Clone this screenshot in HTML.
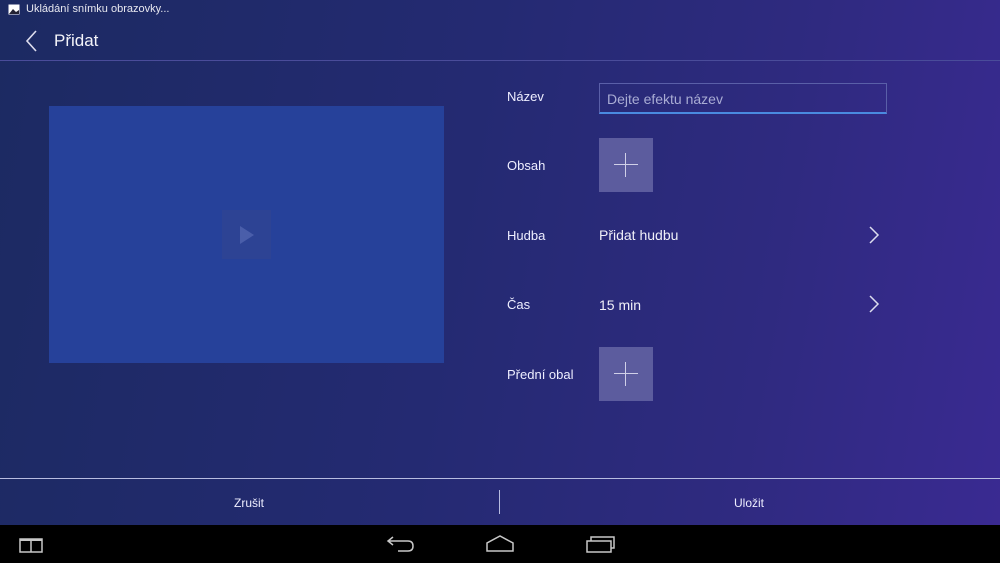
<!DOCTYPE html>
<html><head><meta charset="utf-8"><style>
*{margin:0;padding:0;box-sizing:border-box}
body{width:1000px;height:563px;overflow:hidden;font-family:"Liberation Sans",sans-serif;color:#fff;position:relative;
background:linear-gradient(100deg,#1c2a62 0%,#242a72 45%,#2f2a80 75%,#3a2a92 100%)}
.a{position:absolute}
.lbl{font-size:13px;color:#eef}
.plus{width:54px;height:54px;background:#5c5c9e}
.plus:before,.plus:after{content:"";position:absolute;background:#d0d0e8}
.plus:before{left:15px;top:26px;width:24px;height:1px}
.plus:after{left:26px;top:15px;width:1px;height:24px}
</style></head><body>
<svg class="a" style="left:8px;top:4px" width="12" height="11"><rect x="0.5" y="0.5" width="11" height="10" fill="#fff"/><path d="M1 10 L5 5 L8 8 L11 6 V10Z" fill="#223"/></svg>
<div class="a" style="left:26px;top:3px;font-size:11px;color:#e8e8f0">Ukládání snímku obrazovky...</div>
<svg class="a" style="left:24px;top:29px" width="14" height="24"><path d="M12 2 L3 12 L12 22" stroke="#dde" stroke-width="1.6" fill="none"/></svg>
<div class="a" style="left:54px;top:31px;font-size:17px;color:#f4f4fa">Přidat</div>
<div class="a" style="left:0;top:60px;width:1000px;height:1px;background:#4a4c9a"></div>
<div class="a" style="left:49px;top:106px;width:395px;height:257px;background:#26419a"></div>
<div class="a" style="left:222px;top:210px;width:49px;height:49px;background:#2d4394"></div>
<svg class="a" style="left:238px;top:224px" width="18" height="22"><path d="M2 2 L16 11 L2 20Z" fill="#4a5eaa"/></svg>
<div class="a lbl" style="left:507px;top:89px">Název</div>
<div class="a" style="left:599px;top:83px;width:288px;height:31px;border:1px solid #5a5fa8;border-bottom:2px solid #4a8ae0"></div>
<div class="a" style="left:607px;top:91px;font-size:14px;color:#a9acd4">Dejte efektu název</div>
<div class="a lbl" style="left:507px;top:158px">Obsah</div>
<div class="a plus" style="left:599px;top:138px"></div>
<div class="a lbl" style="left:507px;top:228px">Hudba</div>
<div class="a" style="left:599px;top:227px;font-size:14px;color:#f0f0f8">Přidat hudbu</div>
<svg class="a" style="left:868px;top:225px" width="12" height="20"><path d="M2 2 L10 10 L2 18" stroke="#dde" stroke-width="1.5" fill="none"/></svg>
<div class="a lbl" style="left:507px;top:297px">Čas</div>
<div class="a" style="left:599px;top:297px;font-size:14px;color:#f0f0f8">15 min</div>
<svg class="a" style="left:868px;top:294px" width="12" height="20"><path d="M2 2 L10 10 L2 18" stroke="#dde" stroke-width="1.5" fill="none"/></svg>
<div class="a lbl" style="left:507px;top:367px">Přední obal</div>
<div class="a plus" style="left:599px;top:347px"></div>
<div class="a" style="left:0;top:478px;width:1000px;height:1px;background:#b8bce0"></div>
<div class="a" style="left:499px;top:490px;width:1px;height:24px;background:#b8bce0"></div>
<div class="a" style="left:234px;top:496px;font-size:12px;color:#eef">Zrušit</div>
<div class="a" style="left:734px;top:496px;font-size:12px;color:#eef">Uložit</div>
<div class="a" style="left:0;top:525px;width:1000px;height:38px;background:#000"></div>
<svg class="a" style="left:0;top:525px" width="1000" height="38" fill="none" stroke="#c8c8c8" stroke-width="1.5">
<rect x="20" y="14" width="22" height="13"/><line x1="31" y1="14" x2="31" y2="27"/><line x1="20" y1="15" x2="42" y2="15" stroke-width="2"/>
<path d="M393 12 L388 16 L393 20 M388 16 H408 Q413 16 413 21 Q413 26 408 26 H398"/>
<path d="M487 26 V18 L500 11 L513 18 V26 Z"/>
<rect x="587" y="16" width="24" height="11"/><path d="M591 16 V12 H614 V23 H611"/>
</svg>
</body></html>
